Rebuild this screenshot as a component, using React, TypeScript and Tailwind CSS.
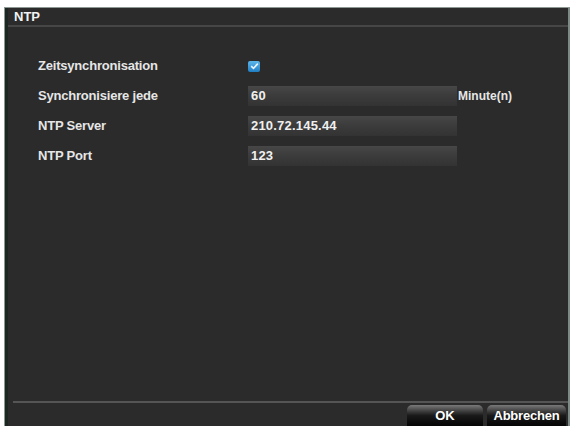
import React from "react";

const font = { fontFamily: '"Liberation Sans", Arial, sans-serif' };

function Input({ value }: { value: string }) {
  return (
    <div className="h-[20px] w-[209px] bg-gradient-to-b from-[#474747] via-[#3b3b3b] to-[#333333] flex items-center pl-[3px] text-[13px] font-bold text-[#f0f0f0] tracking-[0.2px]">
      {value}
    </div>
  );
}

function Row({ label, children }: { label: string; children: React.ReactNode }) {
  return (
    <div className="h-[30px] flex items-center">
      <div className="w-[210px] text-[13px] font-bold text-[#e6e6e6] tracking-[-0.2px]">{label}</div>
      {children}
    </div>
  );
}

export default function App() {
  return (
    <div className="w-[573px] h-[426px] bg-white pl-[4px] pt-[7px] pr-[3px] flex" style={font}>
      <div className="flex-1 flex border-l border-t border-[#8e9893]">
        <div className="flex-1 flex flex-col bg-[#2b2b2b] border-l-[3px] border-[#1c2723] border-r-2 border-r-[#7d8a84]">
          <div className="h-[19px] flex items-center pl-[6px] text-[13px] font-bold text-[#f2f2f2] border-b-2 border-[#464646]">
            NTP
          </div>
          <div className="flex-1 flex flex-col pt-[24px] pl-[30px]">
            <Row label="Zeitsynchronisation">
              <div className="w-[12px] h-[11px] rounded-[2px] bg-gradient-to-b from-[#5cb6ec] to-[#1f7fc4] flex items-center justify-center">
                <svg width="9" height="8" viewBox="0 0 9 8">
                  <path d="M1.2 4.2 L3.5 6.3 L7.8 1.6" fill="none" stroke="#e8f4ff" strokeWidth="1.6" />
                </svg>
              </div>
            </Row>
            <Row label="Synchronisiere jede">
              <Input value="60" />
              <span className="ml-[1px] text-[12px] font-bold text-[#e6e6e6]">Minute(n)</span>
            </Row>
            <Row label="NTP Server">
              <Input value="210.72.145.44" />
            </Row>
            <Row label="NTP Port">
              <Input value="123" />
            </Row>
          </div>
          <div className="ml-[5px] h-[2px] bg-[#555555]" />
          <div className="h-[23px] flex justify-end items-end gap-[4px] pr-[2px]">
            <div className="w-[76px] h-[21px] rounded-t-[5px] bg-gradient-to-b from-[#7a7a7a] via-[#1a1a1a] to-[#050505] flex items-center justify-center text-[13px] font-bold text-white">
              OK
            </div>
            <div className="w-[79px] h-[21px] rounded-t-[5px] bg-gradient-to-b from-[#7a7a7a] via-[#1a1a1a] to-[#050505] flex items-center justify-center text-[13px] font-bold text-white tracking-[-0.2px]">
              Abbrechen
            </div>
          </div>
        </div>
      </div>
    </div>
  );
}
